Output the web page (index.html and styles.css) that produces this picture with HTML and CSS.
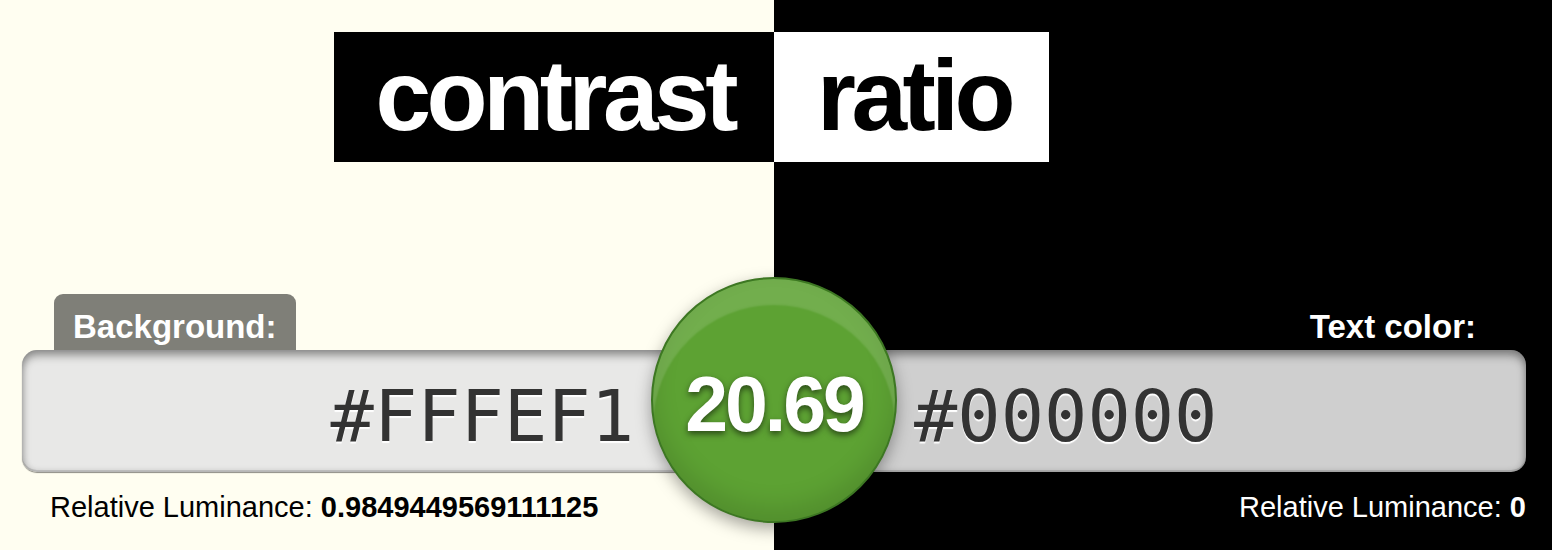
FILE: index.html
```html
<!DOCTYPE html>
<html lang="en">
<head>
<meta charset="utf-8">
<title>Contrast Ratio</title>
<link rel="stylesheet" href="styles.css">
</head>
<body>
  <h1 class="title">
    <span class="word word-dark">contrast</span>
    <span class="word word-light">ratio</span>
  </h1>
  <main class="fields">
    <section class="field field-bg">
      <label class="tab" for="background">Background:</label>
      <input class="color-input" id="background" value="#FFFEF1">
      <p class="lum">Relative Luminance: <strong>0.9849449569111125</strong></p>
    </section>
    <section class="field field-fg">
      <label class="tab" for="foreground">Text color:</label>
      <input class="color-input" id="foreground" value="#000000">
      <p class="lum">Relative Luminance: <strong>0</strong></p>
    </section>
    <output class="result">20.69</output>
  </main>
</body>
</html>
```

FILE: styles.css
```css
html, body {
  margin: 0;
  padding: 0;
  height: 100%;
  overflow: hidden;
}

body {
  font-family: "Liberation Sans", Arial, sans-serif;
  background: linear-gradient(to right, #fffef1 774px, #000 774px);
}

.title {
  display: grid;
  grid-template-columns: 774px 1fr;
  margin: 0;
  padding-top: 32px;
  font-size: 100px;
  font-weight: bold;
  letter-spacing: -0.045em;
}

.word {
  display: block;
  height: 130px;
  box-sizing: border-box;
  line-height: 126px;
}

.word-dark {
  justify-self: end;
  background: #000;
  color: #fff;
  padding: 0 40px 0 41px;
}

.word-light {
  justify-self: start;
  background: #fff;
  color: #000;
  padding: 0 38px 0 43px;
}

.fields {
  position: relative;
  display: grid;
  grid-template-columns: 774px 1fr;
  padding-top: 132px;
}

.field {
  display: flex;
  flex-direction: column;
}

.field-bg {
  padding-left: 22px;
  align-items: flex-start;
}

.field-fg {
  padding-right: 26px;
  align-items: flex-end;
}

.tab {
  display: block;
  box-sizing: border-box;
  height: 56px;
  padding: 10px 19px 0;
  line-height: 46px;
  font-size: 33px;
  font-weight: bold;
  color: #fff;
  background: rgba(0, 0, 0, 0.5);
  border-radius: 9px 9px 0 0;
}

.field-bg .tab {
  margin-left: 32px;
}

.field-fg .tab {
  margin-right: 31px;
}

.color-input {
  display: block;
  box-sizing: border-box;
  width: 752px;
  height: 122px;
  margin: 0;
  padding: 10px 140px 0;
  border: none;
  border-radius: 15px;
  outline: none;
  font-family: "DejaVu Sans Mono", "Liberation Mono", monospace;
  font-variant-numeric: slashed-zero;
  font-size: 72px;
  color: #333;
  text-shadow: 0 2px 1px #fff;
  background: rgba(230, 230, 230, 0.9);
  box-shadow:
    inset 0 6px 9px rgba(0, 0, 0, 0.34),
    inset 0 0 7px rgba(0, 0, 0, 0.18),
    inset 0 -2px 0 rgba(0, 0, 0, 0.12),
    0 1px 1px rgba(0, 0, 0, 0.45);
}

.field-bg .color-input {
  text-align: right;
}

.field-fg .color-input {
  text-align: left;
}

.lum {
  margin: 18px 0 0;
  font-size: 29px;
  line-height: 34px;
}

.field-bg .lum {
  padding-left: 28px;
  color: #000;
}

.field-fg .lum {
  color: #fff;
}

.result {
  position: absolute;
  top: 115px;
  left: 651px;
  width: 246px;
  height: 246px;
  box-sizing: border-box;
  display: flex;
  align-items: center;
  justify-content: center;
  padding-top: 8px;
  border: 2px solid #3d7723;
  border-radius: 50%;
  background: #5da233;
  color: #fff;
  font-size: 77px;
  font-weight: bold;
  letter-spacing: -0.04em;
  text-shadow: 0 3px 6px rgba(0, 0, 0, 0.55);
  box-shadow:
    inset 0 26px 2px rgba(255, 255, 255, 0.13),
    inset 0 -14px 24px rgba(0, 0, 0, 0.12),
    0 6px 16px rgba(0, 0, 0, 0.35);
}
```
